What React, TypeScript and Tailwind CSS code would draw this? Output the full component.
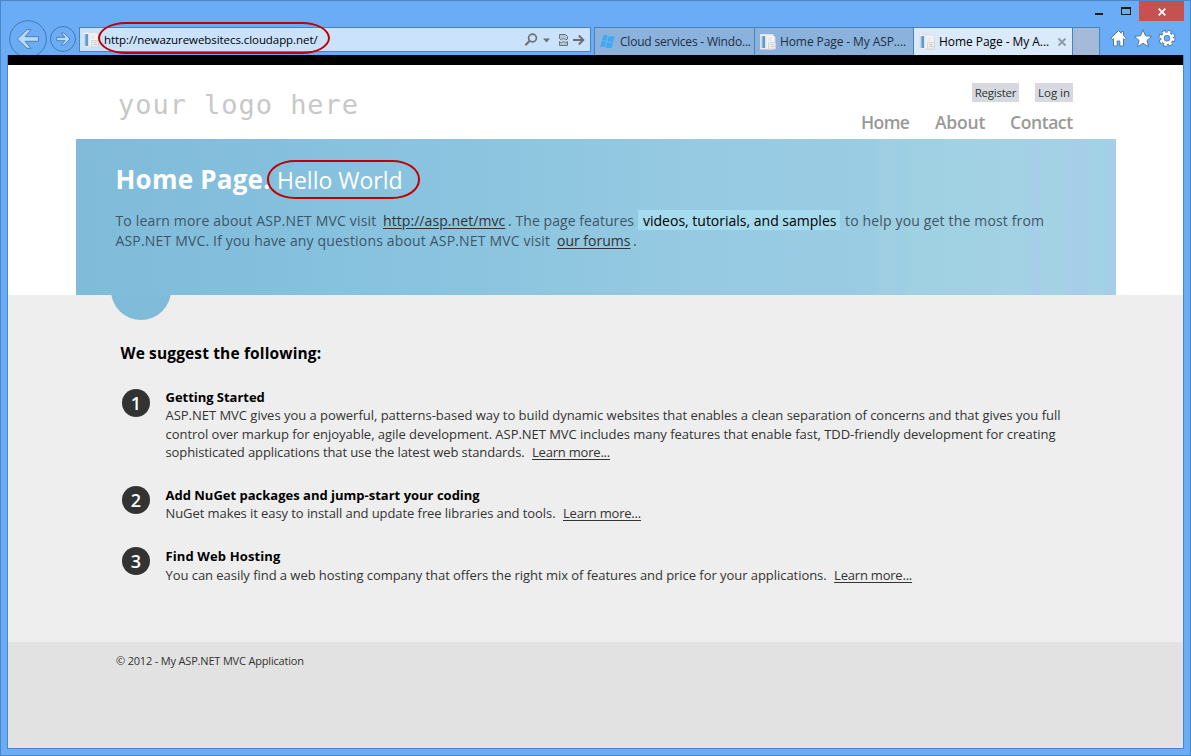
import type { ReactNode } from "react";

function PageIcon() {
  return (
    <svg width="17" height="16" viewBox="0 0 17 16" className="shrink-0">
      <rect x="0.5" y="0.5" width="12" height="14.500" fill="#f4f8fc" stroke="#dde3ea" />
      <rect x="1.500" y="2" width="1.500" height="12" fill="#86b6e0" />
      <rect x="3" y="2" width="2.200" height="12" fill="#5f9bd0" />
      <path d="M6 1h7l2 2v12H6z" fill="#f5f5f5" stroke="#dcdcdc" strokeWidth="0.8" />
      <path d="M8 4h4M8 6h4" stroke="#dedede" />
      <path d="M8.500 8.500h7v6.500h-7z" fill="#ededed" stroke="#cfcfcf" strokeWidth="0.8" />
      <path d="M10.500 10.500h3M10.500 12.500h4" stroke="#cacaca" />
    </svg>
  );
}

function WindowsLogo() {
  return (
    <svg width="15" height="15" viewBox="0 0 15 15" className="shrink-0">
      <g fill="#3fa9f8">
        <path d="M3.200 1.300Q5.500.2 7.900 1.400L6.600 6.900Q4.200 5.700 1.800 6.800Z" />
        <path d="M8.600 1.900Q11.500 3.100 14.800 1.700L13.300 7.300Q10.200 8.600 7.300 7.300Z" />
        <path d="M1.600 7.500Q4 6.400 6.400 7.600L5 13.200Q2.600 11.900.1 13Z" />
        <path d="M7.100 8.100Q10 9.400 13.100 8L11.700 13.600Q8.700 14.900 5.700 13.600Z" />
      </g>
    </svg>
  );
}

function NavButtons() {
  return (
    <svg width="78" height="36" viewBox="0 -2 78 36" className="-mt-[2px] shrink-0">
      <g fill="none" stroke="#4579ad" strokeWidth="1">
        <circle cx="27" cy="18" r="18.300" />
        <circle cx="62" cy="18" r="12.500" />
      </g>
      <path
        d="M16.300 18L26 8.700h4L24 15.700h13.500v4.600H24l6 7h-4z"
        fill="#b9dafb" stroke="#4f80b3" strokeWidth="1" strokeLinejoin="round"
      />
      <path
        d="M69 18L63 12h-3l4 4.300h-8.300v3.400H64L60 24h3z"
        fill="#b9dafb" stroke="#4f80b3" strokeWidth="1" strokeLinejoin="round"
      />
    </svg>
  );
}

function AddressTools() {
  return (
    <svg width="65" height="22" viewBox="0 0 65 22" className="ml-auto shrink-0">
      <g fill="none" stroke="#6b7076">
        <circle cx="7.500" cy="9" r="3.900" strokeWidth="1.700" />
        <path d="M4.500 12L.3 16.200" strokeWidth="2.200" />
      </g>
      <path d="M18 9.500h7l-3.500 4z" fill="#6b7076" />
      <path d="M34.500 9.500v-4h6L42.500 7.500v2.500l-2 1-2-2-2 2zM34.500 12.500l2 1.500 2-2 2 2 2-1.500v4h-8z" fill="#b5c6d8" stroke="#6b7076" />
      <path d="M48 11h10M53.800 6.500l4.500 4.500-4.500 4.500" fill="none" stroke="#6b7076" strokeWidth="2" />
    </svg>
  );
}

function ToolbarIcons() {
  return (
    <svg width="70" height="34" viewBox="0 0 70 34" className="shrink-0">
      <g fill="#fff" stroke="#5079a5" strokeWidth="1">
        <path d="M8.500 9.500L.8 17.200l1.500 1.500 1.200-1v7.300h3.700v-5h2.600v5h3.700v-7.300l1.200 1 1.500-1.500-2.700-2.700v-4h-2.200v1.800z" />
        <path d="M33 8.800l2.500 6 6.300.5-4.800 4.100 1.600 6.300L33 22.300l-5.600 3.400 1.600-6.300-4.800-4.100 6.300-.5z" />
      </g>
      <g fill="none">
        <circle cx="57" cy="17.300" r="6.500" stroke="#5079a5" strokeWidth="4.200" strokeDasharray="3.300 1.800" />
        <circle cx="57" cy="17.300" r="4.600" stroke="#5079a5" strokeWidth="4.200" />
        <circle cx="57" cy="17.300" r="6.300" stroke="#fff" strokeWidth="2.600" strokeDasharray="2.550 2.400" />
        <circle cx="57" cy="17.300" r="4.500" stroke="#fff" strokeWidth="2.600" />
      </g>
    </svg>
  );
}

function BrowserTab({ icon, children, active }: { icon: ReactNode; children: ReactNode; active?: boolean }) {
  return (
    <div
      className={
        active
          ? "flex h-[28px] w-[159px] items-center border-l border-t border-[#4a82bd] bg-[#dbeafa] pl-[5px] text-[12px] text-black"
          : "flex h-[28px] w-[159px] items-center border-l border-t border-[#4a82bd] bg-[#8bb2dd] pl-[5px] text-[12px] text-[#1d2f42] first:w-[160px]"
      }
    >
      {icon}
      {children}
      {active && (
        <svg width="10" height="10" viewBox="0 0 10 10" className="ml-auto mr-[5px]">
          <path d="M1.500 1.500l7 7M8.500 1.500l-7 7" stroke="#8e9aa6" strokeWidth="1.900" />
        </svg>
      )}
    </div>
  );
}

function TitleRow() {
  return (
    <div className="flex h-[20px] justify-end">
      <svg width="54" height="20" viewBox="0 0 54 20">
        <path d="M10 13h8" stroke="#1b1b1b" strokeWidth="2" />
        <rect x="36.500" y="7" width="9" height="6.500" fill="none" stroke="#1b1b1b" />
        <path d="M36 7h10" stroke="#1b1b1b" strokeWidth="2" />
      </svg>
      <div className="mr-[6px] flex w-[45px] items-center justify-center bg-[#c75050]">
        <svg width="8" height="8" viewBox="0 0 8 8" className="mt-[1px]">
          <path d="M.7.7l6.600 6.600M7.300.7L.7 7.300" stroke="#fff" strokeWidth="1.700" />
        </svg>
      </div>
    </div>
  );
}

function Toolbar() {
  return (
    <div className="flex h-[34px] items-start">
      <NavButtons />
      <div className="relative mt-[6px] flex h-[25px] w-[512px] items-center border border-[#4a82bd] bg-[#cbe2fc]">
        <div className="ml-[3px] flex w-[21px]"><PageIcon /></div>
        <span className="whitespace-nowrap text-[11.5px] tracking-[-0.07px] text-black">http://newazurewebsitecs.cloudapp.net/</span>
        <AddressTools />
        <div className="absolute -top-[6px] left-[18px] h-[32px] w-[232px] rounded-[28px/16px] border-2 border-[#c00000]" />
      </div>
      <div className="ml-[3px] mt-[6px] flex">
        <BrowserTab icon={<WindowsLogo />}>
          <span className="whitespace-nowrap pl-[5px] tracking-[-0.2px]">Cloud services - Windo...</span>
        </BrowserTab>
        <BrowserTab icon={<PageIcon />}>
          <span className="whitespace-nowrap pl-[3px] tracking-[-0.1px]">Home Page - My ASP....</span>
        </BrowserTab>
        <BrowserTab icon={<PageIcon />} active>
          <span className="whitespace-nowrap pl-[3px] tracking-[-0.06px]">Home Page - My A...</span>
        </BrowserTab>
        <div className="h-[28px] w-[28px] border-x border-t border-[#4a82bd] bg-[#a3bad8]" />
      </div>
      <div className="ml-[10px]"><ToolbarIcons /></div>
    </div>
  );
}

function SiteHeader() {
  return (
    <header className="flex h-[74px] justify-between bg-white px-[110px]">
      <p className="mt-[20px] whitespace-pre font-['DejaVu_Sans_Mono',monospace] text-[27px] leading-[40px] tracking-[0.96px] text-[#c8c8c8]">your logo here</p>
      <div className="flex flex-col items-end">
        <div className="mt-[18px] flex gap-[16px] text-[11.5px] leading-[19px] text-[#333]">
          <a className="w-[47px] bg-[#d6dae0] text-center tracking-[-0.25px]">Register</a>
          <a className="w-[38px] bg-[#d6dae0] text-center tracking-[-0.05px]">Log in</a>
        </div>
        <nav className="mt-[8px] flex text-[17.5px] font-semibold leading-[24px] text-[#999]">
          <a className="w-[74px] tracking-[-0.6px]">Home</a>
          <a className="w-[75px] tracking-[-0.2px]">About</a>
          <a className="w-[63px] tracking-[-0.42px]">Contact</a>
        </nav>
      </div>
    </header>
  );
}

function Banner() {
  return (
    <section className="bg-white pl-[68px]">
      <div className="relative h-[156px] w-[1040px] bg-[linear-gradient(90deg,#80bbda_0px,#84c0de_200px,#8fc6e0_480px,#96cae2_620px,#9acde4_800px,#9fcfe0_806px,#9fcfe0_820px,#9bcee4_822px,#a0d1e2_836px,#a2d2e3_950px,#a6cee8_954px,#a6cee8_962px,#a3d2e5_966px,#a3d2e5_990px,#a6cee8_996px,#a6cee8_1012px,#a2d3e5_1016px,#a2d3e5_1028px,#a6cee8_1031px)] pl-[39.500px] pt-[20px]">
        <div className="flex h-[40px] items-baseline text-white">
          <h1 className="w-[161.500px] text-[26px] font-bold leading-[40px] tracking-[0.22px]">Home Page.</h1>
          <h2 className="text-[23px] leading-[40px]">Hello World</h2>
        </div>
        <div className="mt-[12px] text-[14px] leading-[20px] text-[#3e5667]">
          <div className="flex whitespace-nowrap">
            <span className="w-[267.500px] tracking-[0.16px]">To learn more about ASP.NET MVC visit</span>
            <a className="w-[122px] tracking-[0.07px] text-[#333] underline underline-offset-2">http://asp.net/mvc</a>
            <span className="ml-[3px] w-[130px] tracking-[0.07px]">. The page features</span>
            <mark className="-mt-px h-[20px] w-[202px] bg-[#a6dbed] pl-[5px] pt-px text-black">videos, tutorials, and samples</mark>
            <span className="ml-[5px] tracking-[0.16px]">to help you get the most from</span>
          </div>
          <div className="flex whitespace-nowrap">
            <span className="w-[441.500px] tracking-[0.17px]">ASP.NET MVC. If you have any questions about ASP.NET MVC visit</span>
            <a className="w-[73px] text-[#333] underline underline-offset-2">our forums</a>
            <span className="ml-[3px]">.</span>
          </div>
        </div>
        <div className="absolute left-[191px] top-[21px] h-[39px] w-[153px] rounded-[28px/19px] border-2 border-[#c00000]" />
        <div className="absolute left-[35px] top-[156px] h-[25px] w-[60px] overflow-hidden">
          <div className="-mt-[35px] size-[60px] rounded-full bg-[#80bbda]" />
        </div>
      </div>
    </section>
  );
}

function Step({ n, title, children }: { n: number; title: ReactNode; children: ReactNode }) {
  return (
    <li className="flex">
      <div className="flex size-[28px] shrink-0 items-center justify-center rounded-full bg-[#333] text-[18px] font-semibold leading-[28px] text-white">{n}</div>
      <div className={n === 1 ? "-mt-px ml-[15.500px] whitespace-nowrap text-[13px] leading-[18.400px] text-[#333]" : "ml-[15.500px] whitespace-nowrap text-[13px] leading-[18.400px] text-[#333]"}>
        <h5 className="font-bold text-black">{title}</h5>
        {children}
      </div>
    </li>
  );
}

function LearnMore() {
  return <a className="ml-[7.500px] tracking-[-0.21px] underline underline-offset-2">Learn more...</a>;
}

function Suggestions() {
  return (
    <main className="h-[347px] bg-[#eee] pl-[112px] pt-[46px]">
      <h3 className="ml-[0.500px] text-[15.500px] font-bold leading-[24px] tracking-[0.14px] text-black">We suggest the following:</h3>
      <ol className="ml-[2px] mt-[24px] flex flex-col gap-[24.400px]">
        <Step n={1} title={<span className="tracking-[-0.03px]">Getting Started</span>}>
          <p className="tracking-[-0.024px]">ASP.NET MVC gives you a powerful, patterns-based way to build dynamic websites that enables a clean separation of concerns and that gives you full</p>
          <p className="tracking-[-0.041px]">control over markup for enjoyable, agile development. ASP.NET MVC includes many features that enable fast, TDD-friendly development for creating</p>
          <p className="tracking-[-0.112px]">sophisticated applications that use the latest web standards.<LearnMore /></p>
        </Step>
        <Step n={2} title="Add NuGet packages and jump-start your coding">
          <p className="tracking-[-0.079px]">NuGet makes it easy to install and update free libraries and tools.<LearnMore /></p>
        </Step>
        <Step n={3} title={<span className="tracking-[0.12px]">Find Web Hosting</span>}>
          <p className="tracking-[-0.050px]">You can easily find a web hosting company that offers the right mix of features and price for your applications.<LearnMore /></p>
        </Step>
      </ol>
    </main>
  );
}

export default function App() {
  return (
    <div className="flex h-[756px] w-[1191px] flex-col overflow-hidden border border-[#4b86c6] bg-[#6aacf6] font-['Open_Sans','Noto_Sans',sans-serif]">
      <TitleRow />
      <Toolbar />
      <div className="ml-[6px] flex h-[694px] w-[1177px] flex-col border-x border-b border-[#4b86c6]">
        <div className="h-[10px] shrink-0 bg-black" />
        <SiteHeader />
        <Banner />
        <Suggestions />
        <footer className="grow bg-[#e2e2e2] pl-[108px] pt-[9px] text-[11px] leading-[20px] tracking-[-0.18px] text-[#333]">
          © 2012 - My ASP.NET MVC Application
        </footer>
      </div>
    </div>
  );
}
